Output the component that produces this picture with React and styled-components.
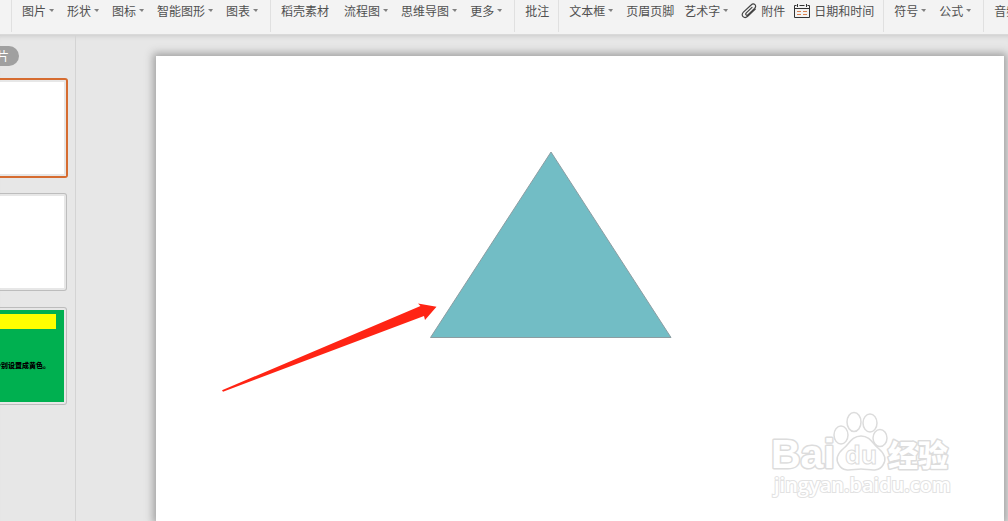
import React from "react";
import styled, { createGlobalStyle } from "styled-components";

const GlobalStyle = createGlobalStyle`
  * {
    box-sizing: border-box;
  }
  body {
    margin: 0;
    background: #e7e7e7;
    color: #505050;
    font-family: "Noto Sans CJK SC", sans-serif;
    font-size: 12px;
  }
`;

const Window = styled.div`
  height: 100vh;
  display: flex;
  flex-direction: column;
  overflow: hidden;
`;

const Toolbar = styled.header`
  display: flex;
  flex: none;
  padding-bottom: 2px;
  overflow: hidden;
  background: #f3f3f3;
  border-bottom: 1px solid #d9d9d9;
`;

const ToolGroup = styled.div`
  display: flex;
  flex: none;
  align-items: flex-start;
  gap: 10px;
  min-width: 12px;
  height: 32px;
  padding: 3px ${(p) => (p.$empty ? 0 : "9px")} 0 ${(p) => (p.$empty ? 0 : "10px")};
  border-right: 1px solid #e0e0e0;
`;

const IconTools = styled.div`
  display: flex;
  gap: 9px;
`;

const ToolButton = styled.button`
  display: flex;
  align-items: center;
  gap: 3px;
  padding: 0 ${(p) => (p.$wide ? "5px" : p.$menu ? "3px" : 0)} 0 0;
  border: 0;
  background: none;
  color: inherit;
  font: inherit;
  line-height: 16px;
  white-space: nowrap;
`;

const IconButton = styled(ToolButton)`
  gap: 4px;
`;

const Caret = styled.span`
  width: 5px;
  margin-bottom: 1px;
  border: solid transparent;
  border-width: 3px 2px 0 3px;
  border-top-color: #808080;
`;

const Workspace = styled.div`
  display: flex;
  flex: 1;
  min-height: 0;
  box-shadow: inset 0 5px 5px -4px #c8c8c8;
`;

const SlidePane = styled.aside`
  display: flex;
  flex: none;
  flex-direction: column;
  gap: 14px;
  width: 76px;
  padding-top: 11px;
  overflow: hidden;
  border-right: 1px solid #d4d4d4;
`;

const PaneTab = styled.button`
  display: flex;
  justify-content: flex-end;
  align-items: center;
  width: 19px;
  height: 20px;
  margin-bottom: -2px;
  padding: 0 10px 0 0;
  overflow: hidden;
  border: 0;
  border-radius: 0 10px 10px 0;
  background: #a0a0a0;
  color: #fff;
  font: inherit;
  line-height: 16px;
  white-space: nowrap;
`;

const Thumb = styled.div`
  flex: none;
  width: ${(p) => (p.$selected ? "68px" : "67px")};
  height: ${(p) => (p.$selected ? "100px" : "98px")};
  margin: ${(p) => (p.$selected ? 0 : "1px 0")};
  padding: 2px 2px 2px 0;
  border: ${(p) => (p.$selected ? "2px solid #d66c30" : "1px solid #bdbdbd")};
  border-left: 0;
  border-radius: 0 3px 3px 0;
`;

const ThumbSlide = styled.div`
  display: flex;
  flex-direction: column;
  align-items: flex-start;
  height: 100%;
  padding-top: 4px;
  overflow: hidden;
  background: ${(p) => p.$color};
`;

const ThumbTitle = styled.div`
  width: 56px;
  height: 15px;
  background: #ff0;
`;

const ThumbText = styled.div`
  display: flex;
  justify-content: flex-end;
  width: 50px;
  margin-top: 31px;
  color: #000;
  font-size: 7px;
  font-weight: 900;
  line-height: 10px;
  white-space: nowrap;
`;

const Stage = styled.main`
  display: flex;
  flex: 1;
  min-width: 0;
  padding: 21px 4px 0 80px;
  overflow: hidden;
`;

const Slide = styled.section`
  position: relative;
  flex: 1;
  background: #fff;
  box-shadow: 0 0 8px 3px #a2a2a2;
`;

const Drawing = styled.svg`
  position: absolute;
  left: ${(p) => p.$x}px;
  top: ${(p) => p.$y}px;
`;

const groups = [
  [
    { label: "图片", menu: true },
    { label: "形状", menu: true },
    { label: "图标", menu: true },
    { label: "智能图形", menu: true },
    { label: "图表", menu: true },
  ],
  [
    { label: "稻壳素材", wide: true },
    { label: "流程图", menu: true },
    { label: "思维导图", menu: true },
    { label: "更多", menu: true },
  ],
  [{ label: "批注" }],
  [
    { label: "文本框", menu: true },
    { label: "页眉页脚" },
    { label: "艺术字", menu: true },
  ],
  [
    { label: "符号", menu: true },
    { label: "公式", menu: true },
  ],
  [{ label: "音频", menu: true }],
];

const ClipIcon = () => (
  <svg width="16" height="16" viewBox="0 0 16 16" fill="none" stroke="#444" strokeWidth="1.2" strokeLinecap="round">
    <path d="M11 4.400 5.300 9.900c-1.400 1.500.3 3.200 1.800 1.800l6.500-6.200c2.800-2.800-.7-6.200-3.500-3.500L2.400 9.100c-3.300 3.300.9 7.400 4.300 4.200l7.600-7.200" />
  </svg>
);

const CalendarIcon = () => (
  <svg width="16" height="16" viewBox="0 0 16 16" fill="none">
    <path d="M2.500 2.500H.5v12h15v-12h-2M5.500 2.500h5M.5 5.500h15M3.500 1v3M12.500 1v3" stroke="#333" />
    <path d="M3 8.500h4M9 8.500h4M3 11.500h4M9 11.500h4" stroke="#d9814f" />
  </svg>
);

const Tools = ({ items, children }) => (
  <ToolGroup>
    {items.map((item) => (
      <ToolButton key={item.label} type="button" $menu={item.menu} $wide={item.wide}>
        {item.label}
        {item.menu && <Caret />}
      </ToolButton>
    ))}
    {children}
  </ToolGroup>
);

const Watermark = () => (
  <Drawing $x={612} $y={350} width="192" height="100" viewBox="0 0 192 100" fill="#fff" stroke="#dcdcdc" strokeWidth="1.5">
    <g fontWeight="700" paintOrder="stroke" strokeWidth="3" strokeLinejoin="round">
      <text x="3" y="62" fontSize="41" fontFamily="Liberation Sans, sans-serif">Bai</text>
      <text x="120" y="60" fontSize="30" fontWeight="900" fontFamily="Noto Sans CJK SC, sans-serif">经验</text>
    </g>
    <ellipse cx="73" cy="29" rx="7" ry="9" />
    <ellipse cx="86" cy="16" rx="7" ry="9.5" />
    <ellipse cx="102" cy="17" rx="7" ry="9" />
    <ellipse cx="112" cy="32" rx="7" ry="8.5" />
    <path d="M93 30c-9 0-12 8-17 12-6 5-9 11-5 17 5 8 14 4 22 4s17 4 22-4c4-6 1-12-5-17-5-4-8-12-17-12Z" />
    <text x="77" y="58" fontSize="25" fontFamily="Open Sans, sans-serif" fontWeight="700" strokeWidth="1">du</text>
    <text x="6" y="86" fontSize="20" fontFamily="Open Sans, sans-serif" fontWeight="600" strokeWidth="2" stroke="#e2e2e2" paintOrder="stroke">jingyan.baidu.com</text>
  </Drawing>
);

const App = () => {
  return (
    <Window>
      <GlobalStyle />
      <Toolbar>
        <ToolGroup $empty />
        <Tools items={groups[0]} />
        <Tools items={groups[1]} />
        <Tools items={groups[2]} />
        <Tools items={groups[3]}>
          <IconTools>
            <IconButton type="button">
              <ClipIcon />
              附件
            </IconButton>
            <IconButton type="button">
              <CalendarIcon />
              日期和时间
            </IconButton>
          </IconTools>
        </Tools>
        <Tools items={groups[4]} />
        <Tools items={groups[5]} />
      </Toolbar>
      <Workspace>
        <SlidePane>
          <PaneTab type="button">幻灯片</PaneTab>
          <Thumb $selected>
            <ThumbSlide $color="#fff" />
          </Thumb>
          <Thumb>
            <ThumbSlide $color="#fff" />
          </Thumb>
          <Thumb>
            <ThumbSlide $color="#00b050">
              <ThumbTitle />
              <ThumbText>分别设置成黄色。</ThumbText>
            </ThumbSlide>
          </Thumb>
        </SlidePane>
        <Stage>
          <Slide>
            <Drawing $x={60} $y={90} width="470" height="260" viewBox="216 146 470 260">
              <path d="M551 152 671 337.500H430.500Z" fill="#72bdc5" stroke="#8b9da2" />
              <path d="M222 390.200 420.500 306 418 303.500 436.500 306.700 425 320 424 316 223 391.800Z" fill="#ff2414" />
            </Drawing>
            <Watermark />
          </Slide>
        </Stage>
      </Workspace>
    </Window>
  );
};

export default App;
